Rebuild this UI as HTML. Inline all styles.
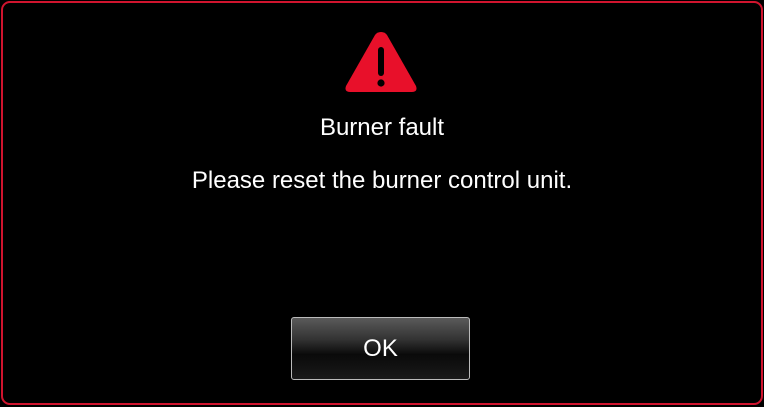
<!DOCTYPE html>
<html><head><style>
body{margin:0;width:764px;height:407px;background:#000;overflow:hidden;font-family:"Liberation Sans",sans-serif;}
.frame{position:absolute;left:1px;top:1px;width:758px;height:400px;border:2px solid #d0142e;border-radius:9px;}
.t{position:absolute;left:0;width:764px;text-align:center;color:#fff;font-size:24px;line-height:28px;}
.btn{position:absolute;left:291px;top:317px;width:177px;height:61px;border:1px solid #bbb;border-radius:3px;
background:linear-gradient(#5a5a5a 0%,#333 35%,#0a0a0a 60%,#1a1a1a 100%);color:#fff;font-size:24px;text-align:center;line-height:61px;}
</style></head><body>
<div class="frame"></div>
<svg style="position:absolute;left:343px;top:29px" width="76" height="66" viewBox="0 0 76 66">
<path d="M38 3 Q34 3 32 6 L3 57 Q1 63 7 63 L69 63 Q75 63 73 57 L44 6 Q42 3 38 3Z" fill="#e8102a"/>
<rect x="35" y="18" width="6" height="29" rx="3" fill="#000"/>
<circle cx="38" cy="54" r="3.6" fill="#000"/>
</svg>
<div class="t" style="top:114px">Burner fault</div>
<div class="t" style="top:167px">Please reset the burner control unit.</div>
<div class="btn">OK</div>
</body></html>
